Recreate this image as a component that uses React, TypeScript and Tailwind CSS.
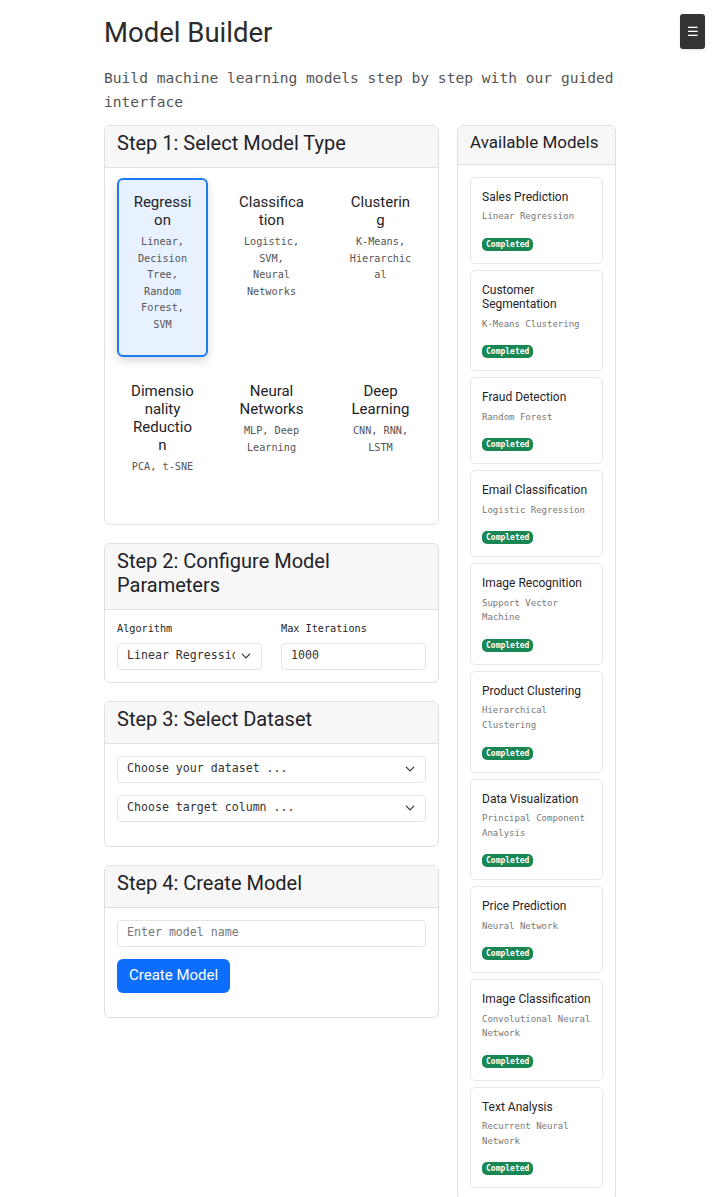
const modelTypes = [
  { name: 'Regression', desc: 'Linear, Decision Tree, Random Forest, SVM', selected: true },
  { name: 'Classification', desc: 'Logistic, SVM, Neural Networks' },
  { name: 'Clustering', desc: 'K-Means, Hierarchical' },
  { name: 'Dimensionality Reduction', desc: 'PCA, t-SNE' },
  { name: 'Neural Networks', desc: 'MLP, Deep Learning' },
  { name: 'Deep Learning', desc: 'CNN, RNN, LSTM' },
]

const models = [
  { name: 'Sales Prediction', algo: 'Linear Regression' },
  { name: 'Customer Segmentation', algo: 'K-Means Clustering' },
  { name: 'Fraud Detection', algo: 'Random Forest' },
  { name: 'Email Classification', algo: 'Logistic Regression' },
  { name: 'Image Recognition', algo: 'Support Vector Machine' },
  { name: 'Product Clustering', algo: 'Hierarchical Clustering' },
  { name: 'Data Visualization', algo: 'Principal Component Analysis' },
  { name: 'Price Prediction', algo: 'Neural Network' },
  { name: 'Image Classification', algo: 'Convolutional Neural Network' },
  { name: 'Text Analysis', algo: 'Recurrent Neural Network' },
]

const Chevron = () => (
  <svg width="10" height="8" viewBox="0 0 16 12" className="shrink-0">
    <path d="M2 3l6 6 6-6" fill="none" stroke="#343a40" strokeWidth="2" strokeLinecap="round" strokeLinejoin="round" />
  </svg>
)

interface StepCardProps {
  title: string
  children: React.ReactNode
}

const StepCard = ({ title, children }: StepCardProps) => (
  <section className="border border-[#e0e0e0] rounded-[6px] overflow-hidden bg-white">
    <div className="bg-[#f7f7f7] border-b border-[#e0e0e0] px-3 pt-[5px] pb-[12px]">
      <h2 className="font-['Roboto',sans-serif] font-normal text-[20px] leading-[24px] text-[#1f2328]">{title}</h2>
    </div>
    {children}
  </section>
)

const FakeSelect = ({ text }: { text: string }) => (
  <div className="h-[27px] border border-[#e3e3e3] rounded-[4px] bg-white flex items-center pl-[9px] pr-[10px] text-[11.6px] text-[#333]">
    <span className="flex-1 overflow-hidden whitespace-nowrap mr-[6px]">{text}</span>
    <Chevron />
  </div>
)

export default function App() {
  return (
    <div className="min-h-screen bg-white font-['DejaVu_Sans_Mono',monospace] text-[#212529]">

      {/* Menu button fixed top right */}
      <button className="fixed top-[14px] right-[15px] w-[25px] h-[35px] bg-[#333] rounded-[3px] text-white text-[13px] flex items-center justify-center shadow">
        ☰
      </button>

      <div className="w-[512px] mx-auto pt-[16px] pb-[20px]">
        <h1 className="font-['Roboto',sans-serif] font-normal text-[27.5px] leading-[34px] text-[#2b2b2b] mb-[16px]">Model Builder</h1>
        <p className="text-[14.6px] leading-[24px] text-[#555] mb-[11px]">
          Build machine learning models step by step with our guided interface
        </p>

        <div className="flex items-start gap-[18px]">

          {/* Steps */}
          <div className="w-[335px] flex flex-col gap-[18px]">
            <StepCard title="Step 1: Select Model Type">
              <div className="grid grid-cols-3 gap-x-[18px] gap-y-[10px] px-3 pt-[10px] pb-[24px]">
                {modelTypes.map((m) => (
                  <div
                    key={m.name}
                    className={
                      m.selected
                        ? 'border-2 border-[#1a7cf0] bg-[#e7f1ff] rounded-[6px] shadow-[0_4px_10px_rgba(0,0,0,0.15)] px-[10.75px] pt-[13px] pb-[22px] text-center'
                        : 'border-2 border-transparent rounded-[6px] px-[10.75px] pt-[13px] pb-[22px] text-center'
                    }
                  >
                    <h3 className="font-['Roboto',sans-serif] font-normal text-[15px] leading-[18px] text-[#1f2328] mb-[5px] break-words">{m.name}</h3>
                    <p className="text-[10.2px] leading-[16.5px] text-[#555] break-words">{m.desc}</p>
                  </div>
                ))}
              </div>
            </StepCard>

            <StepCard title="Step 2: Configure Model Parameters">
              <div className="grid grid-cols-2 gap-x-[19px] px-3 pt-[11px] pb-[12px]">
                <div>
                  <label className="block text-[10.2px] leading-[15px] text-[#212529] mb-[7px]">Algorithm</label>
                  <FakeSelect text="Linear Regression" />
                </div>
                <div>
                  <label className="block text-[10.2px] leading-[15px] text-[#212529] mb-[7px]">Max Iterations</label>
                  <div className="h-[27px] border border-[#e3e3e3] rounded-[4px] flex items-center pl-[9px] text-[11.6px] text-[#333]">1000</div>
                </div>
              </div>
            </StepCard>

            <StepCard title="Step 3: Select Dataset">
              <div className="px-3 pt-3 pb-3 flex flex-col gap-3">
                <FakeSelect text="Choose your dataset ..." />
                <div className="mb-3">
                  <FakeSelect text="Choose target column ..." />
                </div>
              </div>
            </StepCard>

            <StepCard title="Step 4: Create Model">
              <div className="px-3 pt-3 pb-[24px]">
                <div className="h-[27px] border border-[#e3e3e3] rounded-[4px] flex items-center pl-[9px] text-[11.6px] text-[#777] mb-3">
                  Enter model name
                </div>
                <button className="h-[34px] px-3 bg-[#0d6efd] text-white rounded-[6px] font-['Roboto',sans-serif] text-[15px] font-normal">
                  Create Model
                </button>
              </div>
            </StepCard>
          </div>

          {/* Sidebar */}
          <aside className="w-[159px] border border-[#e0e0e0] rounded-[6px] overflow-hidden">
            <div className="bg-[#f7f7f7] border-b border-[#e0e0e0] px-3 pt-[6px] pb-[12px]">
              <h2 className="font-['Roboto',sans-serif] font-normal text-[17px] leading-[20px] text-[#1f2328] whitespace-nowrap">Available Models</h2>
            </div>
            <div className="p-3 flex flex-col gap-[6px]">
              {models.map((m) => (
                <div key={m.name} className="border border-[#e8e8e8] rounded-[5px] px-[11px] pt-[12px] pb-[12px]">
                  <h4 className="font-['Roboto',sans-serif] font-normal text-[12px] leading-[14.4px] text-[#1f2328] mb-[5px]">{m.name}</h4>
                  <p className="text-[9px] leading-[14.6px] text-[#777] mb-[14px]">{m.algo}</p>
                  <div className="flex">
                    <span className="h-[13px] leading-[13px] px-[4px] rounded-[5px] bg-[#198754] text-white text-[8px] font-bold">
                      Completed
                    </span>
                  </div>
                </div>
              ))}
            </div>
          </aside>

        </div>
      </div>
    </div>
  )
}
